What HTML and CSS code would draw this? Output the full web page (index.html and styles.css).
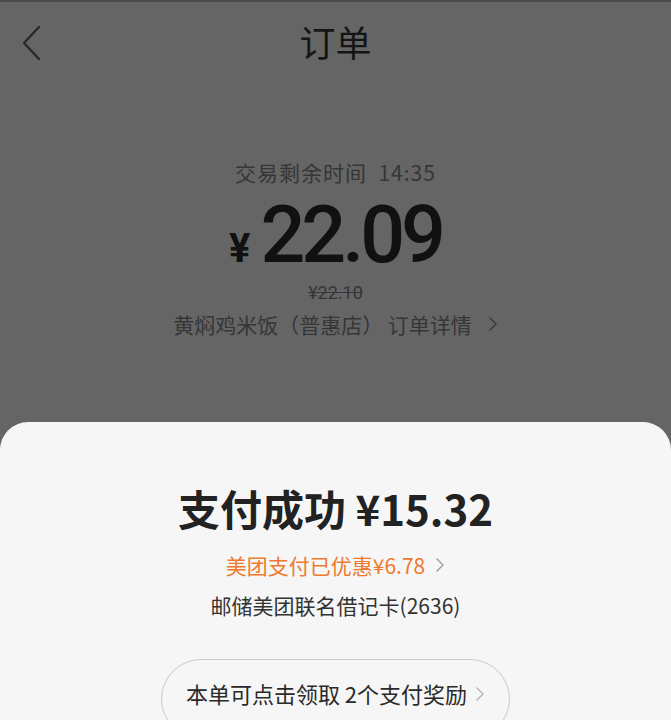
FILE: index.html
```html
<!DOCTYPE html>
<html lang="zh-CN">
<head>
    <meta charset="UTF-8">
    <title>订单</title>
    <link rel="stylesheet" href="styles.css">
</head>
<body>

<div class="page">
    <div class="header">
        <span class="back">
            <svg width="20" height="36" viewBox="0 0 20 36"><path d="M18 2 L3 18 L18 34" fill="none" stroke="#262626" stroke-width="2.2" stroke-linecap="round" stroke-linejoin="round"/></svg>
        </span>
        <h1>订单</h1>
    </div>

    <div class="order">
        <p class="timer">交易剩余时间&nbsp;&nbsp;14:35</p>
        <p class="price"><span class="yen">¥</span>22.09</p>
        <p class="old-price">¥22.10</p>
        <p class="store">黄焖鸡米饭（普惠店） 订单详情
            <svg class="arrow" width="10" height="16" viewBox="0 0 10 16"><path d="M2 2 L8 8 L2 14" fill="none" stroke="#3a3a3a" stroke-width="1.5" stroke-linecap="round" stroke-linejoin="round"/></svg>
        </p>
    </div>

    <div class="sheet">
        <h2>支付成功 ¥15.32</h2>
        <p class="discount">美团支付已优惠¥6.78
            <svg class="arrow" width="10" height="16" viewBox="0 0 10 16"><path d="M2 2 L8 8 L2 14" fill="none" stroke="#9a9a9a" stroke-width="1.4" stroke-linecap="round" stroke-linejoin="round"/></svg>
        </p>
        <p class="card">邮储美团联名借记卡(2636)</p>
        <div class="reward">本单可点击领取 2个支付奖励
            <svg class="arrow" width="10" height="16" viewBox="0 0 10 16"><path d="M2 2 L8 8 L2 14" fill="none" stroke="#b0b0b0" stroke-width="1.3" stroke-linecap="round" stroke-linejoin="round"/></svg>
        </div>
    </div>
</div>

</body>
</html>
```

FILE: styles.css
```css
html, body {
    margin: 0;
    height: 100%;
    overflow: hidden;
}
body {
    font-family: "Noto Sans CJK SC", "Noto Sans", sans-serif;
    background-color: #656565;
    color: #111;
}
p, h1, h2 { margin: 0; font-weight: normal; }
.page {
    border-top: 2px solid #4c4c4c;
    display: flex;
    flex-direction: column;
}
.header {
    height: 78px;
    display: flex;
    align-items: center;
    justify-content: center;
    position: relative;
}
.back {
    position: absolute;
    left: 21px;
    top: 23px;
}
.header h1 {
    font-size: 36px;
    line-height: 78px;
    font-weight: 400;
    color: #151515;
}
.order {
    margin-top: 78px;
    display: flex;
    flex-direction: column;
    align-items: center;
}
.timer {
    font-size: 21px;
    line-height: 28px;
    color: #363636;
    letter-spacing: 1px;
}
.price {
    margin-top: 9px;
    height: 80px;
    display: flex;
    align-items: baseline;
    font-family: Roboto, "Noto Sans", sans-serif;
    font-weight: 500;
    font-size: 79px;
    line-height: 80px;
    letter-spacing: -4px;
    color: #111;
}
.price .yen {
    font-size: 40px;
    font-weight: 700;
    letter-spacing: 0;
    margin-right: 10px;
}
.old-price {
    margin-top: 6px;
    font-family: Roboto, "Noto Sans", sans-serif;
    font-size: 18px;
    line-height: 24px;
    color: #363636;
    text-decoration: line-through;
}
.store {
    margin-top: 5px;
    font-size: 21px;
    line-height: 28px;
    color: #363636;
    display: flex;
    align-items: center;
}
.store .arrow { margin-left: 16px; }
.sheet {
    margin-top: 84px;
    height: 320px;
    background: #f6f6f6;
    border-radius: 28px 28px 0 0;
    display: flex;
    flex-direction: column;
    align-items: center;
    padding-top: 60px;
}
.sheet h2 {
    font-size: 42px;
    line-height: 52px;
    font-weight: 700;
    color: #222;
}
.discount {
    margin-top: 17px;
    font-size: 21px;
    line-height: 28px;
    color: #ef7a2f;
    display: flex;
    align-items: center;
}
.discount .arrow { margin-left: 10px; }
.card {
    margin-top: 12px;
    font-size: 21px;
    line-height: 28px;
    color: #333;
}
.reward {
    margin-top: 40px;
    width: 349px;
    height: 80px;
    border: 1px solid #cacaca;
    border-radius: 40px;
    display: flex;
    justify-content: center;
    align-items: flex-start;
    padding-top: 18px;
    box-sizing: border-box;
    font-size: 22px;
    line-height: 30px;
    color: #2a2a2a;
}
.reward .arrow { margin-left: 8px; margin-top: 8px; }
```
